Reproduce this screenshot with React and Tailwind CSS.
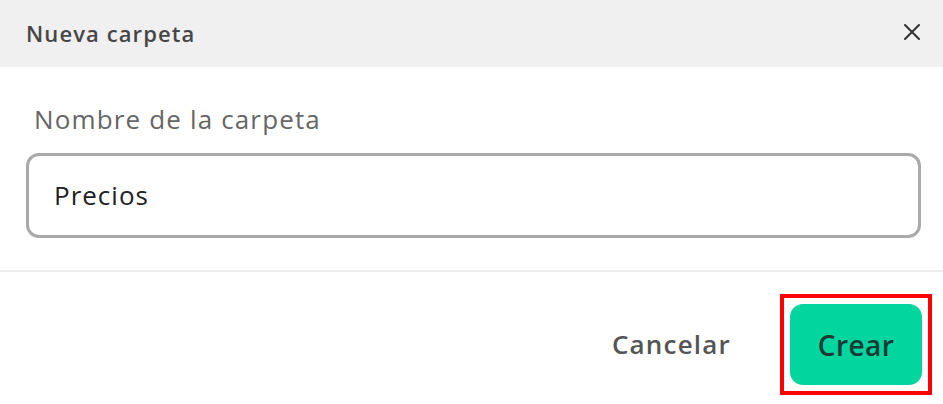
export default function App() {
  return (
    <div className="flex h-[404px] w-[943px] flex-col bg-white font-['Open_Sans',sans-serif]">
      <div className="flex h-[67px] items-center justify-between bg-[#f0f0f0] pl-[26px] pr-[22px]">
        <span className="text-[22px] font-semibold tracking-[1.1px] text-[#464646]">Nueva carpeta</span>
        <svg width="18" height="18" viewBox="0 0 18 18" className="mt-[-3px]">
          <path d="M2 2 L16 16 M16 2 L2 16" stroke="#333" strokeWidth="2" strokeLinecap="round" />
        </svg>
      </div>

      <div className="pl-[26px] pr-[22px] pt-[35px]">
        <label className="block pl-[8px] text-[26px] leading-[34px] tracking-[1.15px] text-[#666]">
          Nombre de la carpeta
        </label>
        <div className="mt-[17px] flex h-[85px] items-center rounded-[13px] border-[3px] border-[#a9a9a9] px-[25px]">
          <span className="text-[26px] tracking-[1px] text-[#222]">Precios</span>
        </div>
      </div>

      <div className="mt-[32px] border-t-2 border-[#ececec]" />

      <div className="flex items-center justify-end pr-[11px] pt-[22px]">
        <button className="mr-[49px] text-[26px] font-semibold tracking-[1.2px] text-[#555]">Cancelar</button>
        <div className="border-4 border-[#ff0000] p-[6px]">
          <button className="flex h-[81px] w-[132px] items-center justify-center rounded-[13px] bg-[#02d59e] text-[28px] font-semibold tracking-[0.4px] text-[#163a35]">
            Crear
          </button>
        </div>
      </div>
    </div>
  );
}
